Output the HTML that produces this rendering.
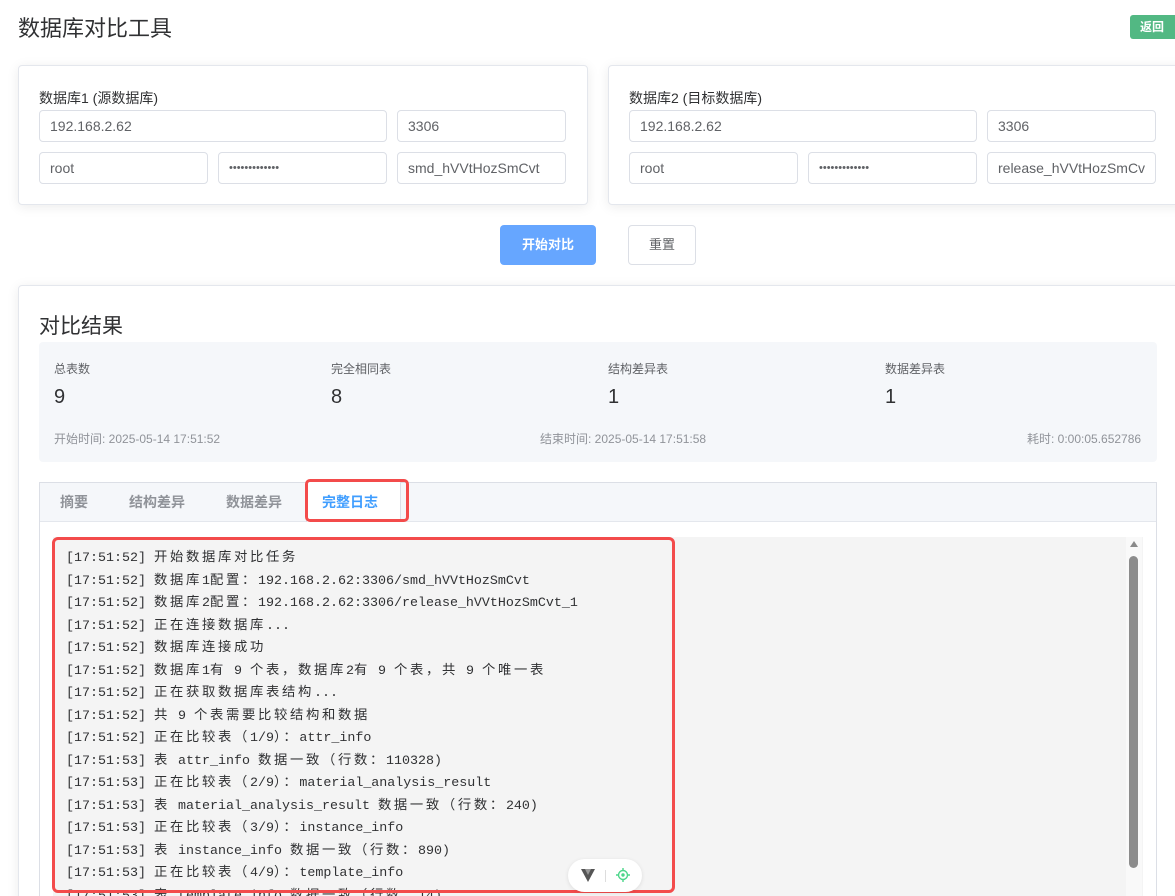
<!DOCTYPE html>
<html><head><meta charset="utf-8"><style>
*{box-sizing:border-box;margin:0;padding:0}
html,body{width:1175px;height:896px;overflow:hidden}
body{background:#fff;font-family:"Liberation Sans","Noto Sans CJK SC",sans-serif;color:#303133;position:relative}
.a{position:absolute}
.card{position:absolute;background:#fff;border:1px solid #e4e7ed;border-radius:4px;box-shadow:0 2px 12px rgba(0,0,0,.08)}
.in{position:absolute;height:32px;border:1px solid #dcdfe6;border-radius:4px;font-size:14px;color:#606266;padding:0 10px;line-height:30px;background:#fff;white-space:nowrap;overflow:hidden}
.in span{display:block;overflow:hidden}
.lbl{font-size:14px;color:#303133}
.sl{font-size:12px;color:#606266}
.sv{font-size:20px;color:#303133}
.st{font-size:12px;color:#909399}
.tab{position:absolute;top:0;height:39px;line-height:39px;font-size:14px;color:#909399;font-weight:bold}
.log{position:absolute;left:66px;top:548px;font-family:"Liberation Mono","Noto Sans CJK SC",monospace;font-size:13.33px;line-height:22.5px;color:#303133;white-space:pre}
.log i{font-style:normal;letter-spacing:2.67px}
</style></head><body>
<div class="a" style="left:18px;top:11px;font-size:22px;color:#303133">数据库对比工具</div>
<div class="a" style="left:1130px;top:15px;width:50px;height:24px;background:#52b883;border-radius:3px;color:#fff;font-size:12px;font-weight:bold;line-height:24px;padding-left:10px">返回</div>

<div class="card" style="left:18px;top:65px;width:570px;height:140px"></div>
<div class="a lbl" style="left:39px;top:88px">数据库1 (源数据库)</div>
<div class="in" style="left:39px;top:110px;width:348px">192.168.2.62</div>
<div class="in" style="left:397px;top:110px;width:169px">3306</div>
<div class="in" style="left:39px;top:152px;width:169px">root</div>
<div class="in" style="left:218px;top:152px;width:169px;font-size:11px">•••••••••••••</div>
<div class="in" style="left:397px;top:152px;width:169px"><span>smd_hVVtHozSmCvt</span></div>

<div class="card" style="left:608px;top:65px;width:580px;height:140px"></div>
<div class="a lbl" style="left:629px;top:88px">数据库2 (目标数据库)</div>
<div class="in" style="left:629px;top:110px;width:348px">192.168.2.62</div>
<div class="in" style="left:987px;top:110px;width:169px">3306</div>
<div class="in" style="left:629px;top:152px;width:169px">root</div>
<div class="in" style="left:808px;top:152px;width:169px;font-size:11px">•••••••••••••</div>
<div class="in" style="left:987px;top:152px;width:169px"><span>release_hVVtHozSmCvt_1</span></div>

<div class="a" style="left:500px;top:225px;width:96px;height:40px;background:#66a6ff;border-radius:4px;color:#fff;font-size:13px;font-weight:bold;text-align:center;line-height:40px">开始对比</div>
<div class="a" style="left:628px;top:225px;width:68px;height:40px;border:1px solid #dcdfe6;border-radius:4px;color:#606266;font-size:13px;text-align:center;line-height:38px">重置</div>

<div class="card" style="left:18px;top:285px;width:1170px;height:620px"></div>
<div class="a" style="left:39px;top:310px;font-size:21px;color:#303133">对比结果</div>
<div class="a" style="left:39px;top:342px;width:1118px;height:120px;background:#f5f7fa;border-radius:4px"></div>
<div class="a sl" style="left:54px;top:360px">总表数</div><div class="a sv" style="left:54px;top:386px">9</div>
<div class="a sl" style="left:331px;top:360px">完全相同表</div><div class="a sv" style="left:331px;top:386px">8</div>
<div class="a sl" style="left:608px;top:360px">结构差异表</div><div class="a sv" style="left:608px;top:386px">1</div>
<div class="a sl" style="left:885px;top:360px">数据差异表</div><div class="a sv" style="left:885px;top:386px">1</div>
<div class="a st" style="left:54px;top:430px">开始时间: 2025-05-14 17:51:52</div>
<div class="a st" style="left:540px;top:430px">结束时间: 2025-05-14 17:51:58</div>
<div class="a st" style="left:1027px;top:430px">耗时: 0:00:05.652786</div>

<div class="a" style="left:39px;top:482px;width:1118px;height:420px;border:1px solid #dcdfe6"></div>
<div class="a" style="left:40px;top:483px;width:1116px;height:39px;background:#f5f7fa;border-bottom:1px solid #e4e7ed">
 <div class="tab" style="left:20px">摘要</div>
 <div class="tab" style="left:89px">结构差异</div>
 <div class="tab" style="left:186px">数据差异</div>
 <div class="a" style="left:266px;top:-1px;width:95px;height:40px;background:#fff;border-left:1px solid #dcdfe6;border-right:1px solid #dcdfe6"></div>
 <div class="tab" style="left:282px;color:#409eff">完整日志</div>
</div>
<div class="a" style="left:305px;top:479px;width:104px;height:43px;border:3px solid #f34b4b;border-radius:5px"></div>

<div class="a" style="left:53px;top:537px;width:1090px;height:370px;background:#f4f4f4"></div>
<div class="a" style="left:1126px;top:537px;width:16px;height:370px;background:#f9f9f9"></div>
<div class="a" style="left:1130px;top:541px;width:0;height:0;border-left:4px solid transparent;border-right:4px solid transparent;border-bottom:6px solid #8a8a8a"></div>
<div class="a" style="left:1129px;top:556px;width:9px;height:312px;background:#8c8c8c;border-radius:5px"></div>

<div class="log"><span>[17:51:52] <i>开始数据库对比任务</i>
[17:51:52] <i>数据库</i>1<i>配置：</i>192.168.2.62:3306/smd_hVVtHozSmCvt
[17:51:52] <i>数据库</i>2<i>配置：</i>192.168.2.62:3306/release_hVVtHozSmCvt_1
[17:51:52] <i>正在连接数据库</i>...
[17:51:52] <i>数据库连接成功</i>
[17:51:52] <i>数据库</i>1<i>有</i> 9 <i>个表，数据库</i>2<i>有</i> 9 <i>个表，共</i> 9 <i>个唯一表</i>
[17:51:52] <i>正在获取数据库表结构</i>...
[17:51:52] <i>共</i> 9 <i>个表需要比较结构和数据</i>
[17:51:52] <i>正在比较表（</i>1/9<i>）：</i>attr_info
[17:51:53] <i>表</i> attr_info <i>数据一致（行数：</i>110328)
[17:51:53] <i>正在比较表（</i>2/9<i>）：</i>material_analysis_result
[17:51:53] <i>表</i> material_analysis_result <i>数据一致（行数：</i>240)
[17:51:53] <i>正在比较表（</i>3/9<i>）：</i>instance_info
[17:51:53] <i>表</i> instance_info <i>数据一致（行数：</i>890)
[17:51:53] <i>正在比较表（</i>4/9<i>）：</i>template_info
[17:51:53] <i>表</i> template_info <i>数据一致（行数：</i>14)</span></div>

<div class="a" style="left:52px;top:537px;width:623px;height:356px;border:3px solid #f34b4b;border-radius:6px"></div>
<div class="a" style="left:568px;top:859px;width:74px;height:33px;background:#fff;border-radius:17px;box-shadow:0 1px 4px rgba(0,0,0,.1)">
 <svg class="a" style="left:13px;top:10px" width="14" height="13" viewBox="0 0 14 13"><path d="M0 0h14L7 13z" fill="#555"/><path d="M4 0h6L7 6z" fill="#999"/></svg>
 <div class="a" style="left:37px;top:11px;width:1px;height:12px;background:#ddd"></div>
 <svg class="a" style="left:48px;top:9px" width="14" height="14" viewBox="0 0 14 14" fill="none" stroke="#4cd68a" stroke-width="1.4"><circle cx="7" cy="7" r="4.5"/><circle cx="7" cy="7" r="1" fill="#4cd68a"/><path d="M7 0v2.5M7 11.5V14M0 7h2.5M11.5 7H14"/></svg>
</div>
</body></html>
